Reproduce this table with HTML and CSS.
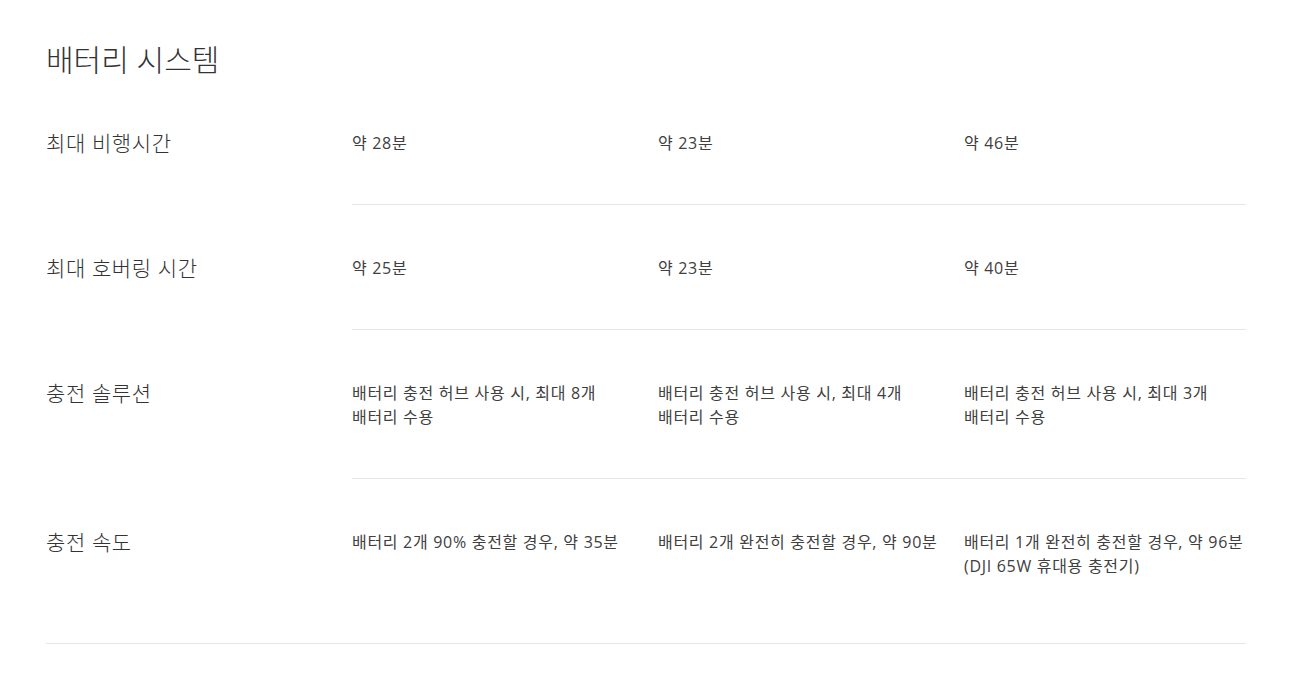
FILE: index.html
```html
<!DOCTYPE html>
<html lang="ko">
<head>
<meta charset="utf-8">
<title>배터리 시스템</title>
<link rel="stylesheet" href="styles.css">
</head>
<body>
<section class="spec">
  <h2 class="spec-title">배터리 시스템</h2>
  <div class="spec-row">
    <div class="spec-label">최대 비행시간</div>
    <div class="spec-values">
      <div class="spec-cell">약 28분</div>
      <div class="spec-cell">약 23분</div>
      <div class="spec-cell">약 46분</div>
    </div>
  </div>
  <div class="spec-row">
    <div class="spec-label">최대 호버링 시간</div>
    <div class="spec-values">
      <div class="spec-cell">약 25분</div>
      <div class="spec-cell">약 23분</div>
      <div class="spec-cell">약 40분</div>
    </div>
  </div>
  <div class="spec-row">
    <div class="spec-label">충전 솔루션</div>
    <div class="spec-values">
      <div class="spec-cell">배터리 충전 허브 사용 시, 최대 8개<br>배터리 수용</div>
      <div class="spec-cell">배터리 충전 허브 사용 시, 최대 4개<br>배터리 수용</div>
      <div class="spec-cell">배터리 충전 허브 사용 시, 최대 3개<br>배터리 수용</div>
    </div>
  </div>
  <div class="spec-row spec-row-last">
    <div class="spec-label">충전 속도</div>
    <div class="spec-values">
      <div class="spec-cell">배터리 2개 90% 충전할 경우, 약 35분</div>
      <div class="spec-cell">배터리 2개 완전히 충전할 경우, 약 90분</div>
      <div class="spec-cell">배터리 1개 완전히 충전할 경우, 약 96분<br>(DJI 65W 휴대용 충전기)</div>
    </div>
  </div>
  <div class="spec-end"></div>
</section>
</body>
</html>
```

FILE: styles.css
```css
html, body {
  margin: 0;
  padding: 0;
  background: #ffffff;
}

body {
  font-family: "Open Sans", "Noto Sans CJK KR", sans-serif;
  color: #333333;
}

.spec {
  width: 1200px;
  padding: 40px 0 0 46px;
}

.spec-title {
  margin: 0;
  font-size: 30px;
  line-height: 40px;
  font-weight: 300;
  color: #333333;
}

.spec-row {
  display: grid;
  grid-template-columns: 306px 894px;
}

.spec-label {
  font-size: 21px;
  line-height: 24px;
  font-weight: 300;
  letter-spacing: 0.6px;
  padding-top: 51px;
  color: #333333;
}

.spec-values {
  display: grid;
  grid-template-columns: 306px 306px 282px;
  padding: 51px 0 49px;
  border-bottom: 1px solid #e6e6e6;
}

.spec-row-last .spec-values {
  border-bottom: none;
}

.spec-cell {
  font-size: 16px;
  line-height: 24px;
  letter-spacing: 0.7px;
  color: #404040;
}

.spec-end {
  margin-top: 16px;
  border-top: 1px solid #e6e6e6;
}
```
